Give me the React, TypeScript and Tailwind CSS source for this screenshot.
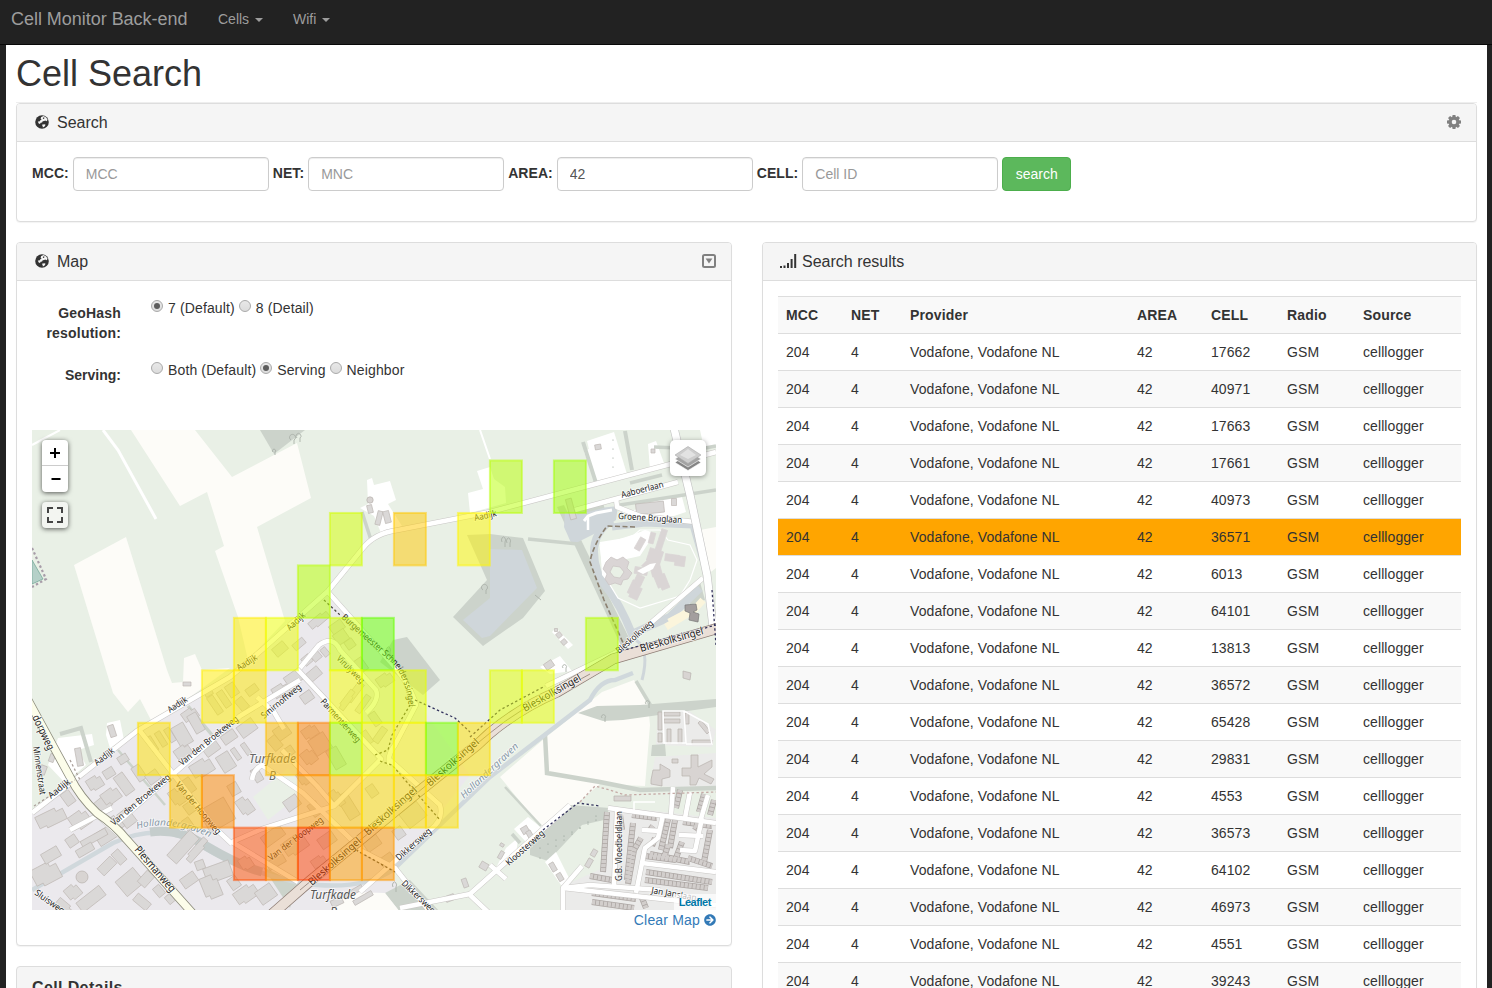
import React from "react";
import { FaArrowCircleRight } from "react-icons/fa";

type Pt = [number, number, number, number];
type Box = [number, number, number, number, number];

const rows = [17662, 40971, 17663, 17661, 40973, 36571, 6013, 64101, 13813, 36572, 65428, 29831, 4553, 36573, 64102, 46973, 4551, 39243];

const cells: [number, number, string][] = [
  [14, 0, "#b8ff00"], [16, 0, "#a2ff00"],
  [9, 1, "#d4ff00"], [11, 1, "#ffc800"], [13, 1, "#fff700"],
  [8, 2, "#b8ff00"],
  [6, 3, "#ffee00"], [7, 3, "#eeff00"], [9, 3, "#d0ff00"], [10, 3, "#66ff00"], [17, 3, "#b8ff00"],
  [5, 4, "#ffee00"], [6, 4, "#ffea00"], [9, 4, "#f7ff00"], [10, 4, "#dcff00"], [11, 4, "#e6ff00"], [14, 4, "#e4ff00"], [15, 4, "#eaff00"],
  [3, 5, "#ffe100"], [7, 5, "#ffc000"], [8, 5, "#ff8400"], [9, 5, "#aaff00"], [10, 5, "#f2fa00"], [11, 5, "#faf500"], [12, 5, "#7dff00"], [13, 5, "#ffdd00"],
  [4, 6, "#ffc400"], [5, 6, "#ff8a00"], [8, 6, "#ff9900"], [9, 6, "#ffc800"], [10, 6, "#ffe000"], [11, 6, "#ffdd00"], [12, 6, "#ffdd00"],
  [6, 7, "#ff4d00"], [7, 7, "#ff8800"], [8, 7, "#ff4000"], [9, 7, "#ff9d00"], [10, 7, "#ff9900"],
];

// Industrial estate footprints: x, y, width, height, rotation
const buildings: Box[] = [
  [152, 744, 6, 16, -32], [161, 739, 6, 16, -32], [170, 735, 6, 15, -32], [182, 735, 14, 22, -30], [190, 715, 15, 12, -35], [196, 723, 10, 20, -30],
  [183, 752, 16, 12, -35], [215, 705, 7, 20, -34], [224, 699, 7, 18, -34], [208, 692, 8, 8, -30], [232, 690, 10, 13, -34], [242, 704, 9, 13, -40],
  [252, 690, 12, 8, -36], [247, 728, 18, 13, -36], [229, 737, 15, 10, -35], [211, 748, 16, 12, -36], [202, 768, 22, 16, -32], [226, 762, 14, 18, -32],
  [246, 749, 5, 13, -35], [236, 754, 5, 13, -35], [281, 691, 16, 13, -32], [294, 678, 18, 12, -35], [307, 697, 12, 10, -35], [314, 674, 14, 10, -40],
  [280, 649, 14, 10, -40], [299, 644, 13, 7, -40], [319, 620, 22, 9, -40], [307, 660, 9, 9, -40], [316, 656, 9, 9, -40], [325, 652, 6, 9, -40],
  [337, 627, 14, 10, -35], [341, 637, 13, 12, -35], [350, 644, 9, 9, -35], [361, 665, 9, 14, -35], [385, 680, 16, 12, -35],
  [355, 692, 7, 22, 37], [347, 700, 7, 22, 37], [363, 704, 6, 20, 35], [375, 719, 8, 14, -35], [380, 735, 17, 7, -55], [366, 738, 9, 14, -35],
  [282, 732, 15, 13, -35], [275, 743, 10, 14, -40], [288, 752, 12, 9, -35], [310, 732, 15, 12, -35], [320, 744, 18, 18, -33], [309, 757, 13, 15, -38],
  [336, 758, 12, 21, -30], [304, 778, 11, 14, -35], [292, 803, 15, 12, -35], [315, 809, 10, 14, -35], [348, 806, 12, 27, -32], [337, 798, 9, 18, -35],
  [372, 791, 9, 12, -35], [383, 820, 10, 9, -35], [413, 815, 22, 18, -38], [399, 833, 10, 11, -35], [372, 843, 16, 12, -35], [387, 860, 14, 10, -35],
  [273, 836, 23, 12, -36], [295, 845, 24, 17, -35], [327, 840, 17, 12, -35], [319, 862, 14, 11, -35], [276, 862, 19, 9, -30],
  [51, 818, 29, 15, -26], [68, 798, 10, 14, -36], [80, 820, 19, 17, -35], [102, 805, 17, 13, -40], [95, 783, 15, 13, -32], [109, 773, 11, 9, -32],
  [123, 759, 10, 8, -32], [124, 784, 11, 22, -36], [111, 796, 18, 14, -36], [139, 773, 9, 16, -34], [153, 777, 13, 11, -36], [127, 818, 13, 17, -37],
  [116, 823, 11, 15, -37], [108, 834, 25, 14, -32], [72, 841, 11, 10, -34], [94, 838, 28, 7, -29], [85, 850, 18, 8, -30], [107, 866, 18, 10, -45],
  [119, 857, 9, 14, -42], [130, 882, 23, 19, -40], [146, 879, 15, 10, -48], [159, 891, 8, 11, -40], [171, 898, 10, 9, -40], [142, 902, 17, 9, 40],
  [46, 874, 27, 20, -28], [51, 855, 18, 11, -30], [73, 892, 14, 14, -40], [91, 899, 29, 12, -38], [64, 907, 18, 10, 40], [183, 847, 13, 34, 42],
  [197, 850, 8, 28, 42], [189, 880, 16, 11, -35], [200, 865, 9, 9, -20], [218, 872, 27, 16, -20], [211, 887, 17, 23, -22], [234, 883, 10, 12, -35],
  [246, 894, 23, 15, -35], [266, 894, 18, 15, -35], [246, 863, 12, 13, -33], [217, 815, 29, 25, -30], [245, 806, 13, 18, -35], [234, 789, 10, 12, -30],
  [257, 775, 8, 14, -30], [188, 786, 11, 15, -35], [177, 797, 12, 17, -35], [191, 807, 13, 11, -36], [188, 824, 8, 12, -35],
  [353, 892, 21, 5, -30], [363, 898, 21, 5, -30], [337, 902, 12, 7, -25], [79, 757, 6, 18, -10], [43, 770, 6, 9, 20], [52, 758, 5, 8, 20],
  [112, 731, 6, 12, -18], [187, 684, 8, 4, 0], [379, 518, 5, 14, 14], [387, 517, 6, 12, -14], [370, 509, 5, 8, -14], [571, 509, 6, 21, -15],
  [650, 508, 28, 11, -6], [674, 502, 5, 7, 0], [653, 451, 4, 4, 0], [598, 447, 6, 5, -10], [564, 642, 5, 5, -40], [559, 635, 5, 5, -40], [556, 630, 3, 3, 0],
  [549, 665, 9, 7, -35], [525, 830, 7, 7, -30], [530, 835, 5, 9, -30], [553, 867, 5, 9, -30], [560, 877, 5, 8, -30], [589, 863, 5, 9, 30], [594, 853, 5, 7, 30],
  [484, 866, 8, 7, 30], [465, 883, 5, 9, -20], [450, 898, 9, 6, -20], [502, 845, 4, 3, 30], [501, 855, 4, 8, 30],
];

const hero: Box[] = [
  [661, 541, 6, 24, 18], [652, 538, 5, 11, 15], [640, 544, 6, 13, 30], [655, 556, 14, 13, 18], [641, 571, 13, 7, 10], [650, 563, 16, 8, -45],
  [635, 590, 12, 17, 25], [639, 580, 8, 10, 25], [661, 580, 11, 20, -22], [656, 570, 10, 12, -15], [672, 558, 14, 7, 8], [680, 561, 10, 10, 8],
];

const fields = [
  "131,430 195,430 232,477 297,443 311,498 257,527 285,621 248,660 238,617 215,551 224,546 207,492 180,506",
  "74,565 126,537 167,670 172,683 183,682 184,658 195,654 202,670 230,668 153,724 140,699 128,712 113,693",
  "500,777 545,738 602,692 634,680 648,705 650,725 645,786 600,784 575,805 543,829",
  "700,530 716,527 716,568 707,575",
];

const whites = [
  "367,480 372,478 374,485 390,481 396,500 388,504 402,526 381,533 374,516 360,508 368,504",
  "468,493 483,489 477,471 490,467 494,479 505,487 506,503 470,513",
  "587,441 614,432 627,474 598,486", "648,444 656,441 665,466 650,470",
  "540,667 560,656 572,671 550,674", "700,430 716,430 716,445 704,448",
  "58,738 92,734 94,745 78,750 86,765 65,783 48,765", "107,723 120,720 124,740 110,748 106,735",
  "514,829 528,817 543,829 526,842", "490,880 506,848 518,838 516,855", "545,862 556,852 570,880 563,888",
  "552,632 556,628 573,645 568,649", "632,511 662,498 682,497 686,512 668,518 630,514",
  "584,452 590,448 600,482 596,484",
];

const streets = [
  "M32 813 L76 779 L137 731 L230 677 L263 649 L328 591 L363 548 Q375 533 398 530 L490 512 L716 452",
  "M575 510 L678 482", "M616 498 L617 507 L640 516 L695 522", "M328 592 L393 665 Q412 688 416 705 L395 745 Q386 757 390 765",
  "M300 668 L319 645 Q333 635 340 650 L376 690 Q380 700 366 713", "M297 669 L381 759 L334 806 L317 786 L282 750",
  "M70 830 L112 808", "M110 829 L240 716 L300 680", "M140 731 L215 828 L232 844", "M257 697 L274 712 L284 729",
  "M390 760 L440 805 Q444 820 430 830 L360 892", "M232 842 L262 829 L334 806", "M360 850 L395 868 L430 912",
  "M252 780 Q253 770 262 765 L303 793 L361 849", "M232 842 L298 882", "M125 840 L97 815",
  "M703 578 L617 652 L546 686", "M400 908 L470 894 L570 805", "M490 865 L506 879", "M470 895 L488 912",
  "M544 828 L560 815", "M608 808 L716 823", "M563 888 L582 866", "M563 888 L716 905", "M563 912 V888 L590 885 L660 890",
  "M617 810 L614 887", "M663 815 L658 838 L645 848 L636 893", "M642 830 L660 831", "M702 818 L695 851 L680 850", "M679 835 L703 836",
  "M642 863 L716 872", "M673 787 L671 815", "M708 795 L700 822", "M690 792 L685 818",
];

const trees = [
  "467,535 490,534 523,538 545,591 523,618 490,641 483,646 453,617 487,580",
  "260,430 305,430 274,454", "393,640 407,637 440,680 423,695 380,662",
  "578,713 597,706 640,705 716,699 716,707 623,720 603,721", "652,745 665,744 666,756 651,756",
  "530,840 545,828 570,805 610,808 604,820 582,825 548,861 530,855",
  "557,507 564,505 630,640 622,648", "263,867 298,884 290,908", "385,893 410,880 440,912 400,912", "690,590 700,582 705,600 690,605",
];

const labels: { t: string; p: Pt; s?: number; c?: string; i?: boolean }[] = [
  { t: "Aadijk", p: [475, 521, 497, 516] }, { t: "Aadijk", p: [290, 631, 306, 616] }, { t: "Aadijk", p: [239, 671, 258, 659] },
  { t: "Aadijk", p: [170, 713, 188, 701] }, { t: "Aadijk", p: [97, 766, 115, 752] }, { t: "Aadijk", p: [51, 799, 71, 783] },
  { t: "Aaboerlaan", p: [622, 498, 664, 487] }, { t: "Groene Bruglaan", p: [618, 519, 682, 523] },
  { t: "Bleskolkweg", p: [619, 654, 654, 624] }, { t: "Virulyweg", p: [336, 659, 361, 684] }, { t: "Parmentierweg", p: [320, 702, 357, 743] },
  { t: "Smirnoffweg", p: [264, 719, 302, 688] }, { t: "Van den Broekeweg", p: [182, 766, 239, 720] }, { t: "Van den Broekeweg", p: [114, 826, 171, 778] },
  { t: "Van der Hoopweg", p: [175, 785, 217, 835] }, { t: "Van der Hoopweg", p: [271, 861, 324, 821] },
  { t: "Dikkersweg", p: [399, 861, 432, 832] }, { t: "Dikkersweg", p: [401, 884, 432, 914] }, { t: "Kloosterweg", p: [509, 866, 545, 834] },
  { t: "G.B. Vloedbeldlaan", p: [622, 881, 622, 811] }, { t: "Jan Janslaan", p: [651, 893, 696, 901] }, { t: "Minnenstraat", p: [33, 747, 40, 795] }, { t: "Sluisweg", p: [34, 894, 62, 914] },
  { t: "dorpweg", p: [32, 717, 48, 751], s: 11 }, { t: "Plesmanweg", p: [134, 850, 171, 893], s: 11 },
  { t: "Bleskolksingel", p: [312, 886, 362, 842], s: 10.5 }, { t: "Bleskolksingel", p: [368, 836, 418, 791], s: 10.5 },
  { t: "Bleskolksingel", p: [430, 787, 480, 743], s: 10.5 }, { t: "Bleskolksingel", p: [525, 712, 582, 680], s: 10.5 }, { t: "Bleskolksingel", p: [641, 652, 704, 634], s: 10.5 },
  { t: "Turfkade", p: [249, 763, 296, 763], s: 12, c: "#666", i: true }, { t: "B", p: [269, 780, 276, 780], s: 12, c: "#666", i: true },
  { t: "Turfkade", p: [310, 899, 356, 899], s: 12, c: "#555", i: true }, { t: "B", p: [330, 916, 337, 916], s: 12, c: "#555", i: true },
  { t: "Hollandergraven", p: [464, 799, 519, 747], s: 9.5, c: "#8798a7", i: true },
];

function Label({ t, p, s = 9, c = "#1c1c1c", i }: { t: string; p: Pt; s?: number; c?: string; i?: boolean }) {
  const dx = p[2] - p[0];
  const dy = p[3] - p[1];
  return (
    <text
      transform={`translate(${p[0]} ${p[1]}) rotate(${(Math.atan2(dy, dx) * 180) / Math.PI})`}
      textLength={Math.hypot(dx, dy)}
      lengthAdjust="spacingAndGlyphs"
      fontSize={s}
      fontStyle={i ? "italic" : "normal"}
      fill={c}
      stroke="#fff"
      strokeOpacity={0.7}
      strokeWidth={1.6}
      paintOrder="stroke"
    >
      {t}
    </text>
  );
}

function Footprints({ items, fill = "#dad8d7", outline = "#bfb9b5" }: { items: Box[]; fill?: string; outline?: string }) {
  return (
    <g fill={fill} stroke={outline} strokeWidth={0.7}>
      {items.map(([x, y, w, h, r], k) => (
        <path
          key={k}
          transform={`translate(${x} ${y}) rotate(${r})`}
          d={w * h > 150 && k % 2 === 0
            ? `M${-w / 2} ${-h / 2}H${w / 4}V${-h / 4}H${w / 2}V${h / 2}H${-w / 4}V${h / 3}H${-w / 2}Z`
            : `M${-w / 2} ${-h / 2}H${w / 2}V${h / 2}H${-w / 2}Z`}
        />
      ))}
    </g>
  );
}

function Terraces() {
  const lines = [
    "M632 815 L657 818", "M633 823 L627 880", "M641 838 L634 850 L628 884", "M607 812 L603 872", "M668 819 L661 850", "M675 820 L670 848", "M645 856 L676 860",
    "M683 822 L712 826", "M710 830 L704 862", "M688 858 L712 866", "M646 872 L712 882", "M645 880 L708 888", "M592 893 L636 899", "M592 902 L634 908",
    "M682 842 L676 858", "M653 826 L650 830", "M704 794 L699 812", "M680 790 L676 808", "M714 800 L710 815", "M642 898 L646 908", "M590 876 L612 880",
    "M668 845 L664 858", "M694 826 L700 830", "M655 838 L652 846", "M650 854 L690 862", "M620 815 L622 830",
  ];
  return (
    <g fill="none">
      {lines.map((d) => <path key={d} d={d} stroke="#aca6a3" strokeWidth={6} />)}
      {lines.map((d) => <path key={d} d={d} stroke="#d2cecc" strokeWidth={4.6} strokeDasharray="3.2 .8" />)}
    </g>
  );
}

function MapDrawing() {
  return (
    <svg viewBox="32 430 684 480" width="684" height="480" className="block" fontFamily="'Noto Sans', sans-serif">
      <rect x="32" y="430" width="684" height="480" fill="#e9f0e6" />
      {fields.map((p) => <polygon key={p} points={p} fill="#fdfcf8" />)}
      <polygon points="32,813 137,731 230,677 328,590 400,668 420,705 470,775 393,872 405,912 32,912" fill="#ebe9ed" />
      <polygon points="610,806 716,818 716,912 562,912 565,885 603,868" fill="#ebebea" />
      <polygon points="658,708 685,708 716,730 712,747 656,745" fill="#ebebea" />
      <polygon points="655,757 716,753 716,788 650,786" fill="#ebebea" />
      {trees.map((p) => <polygon key={p} points={p} fill="#ccd3cb" />)}
      {whites.map((p) => <polygon key={p} points={p} fill="#fff" />)}
      <polygon points="490,549 522,550 537,588 490,636 482,638 463,620 490,598" fill="#cfd6da" />
      <polygon points="253,797 288,768 298,782 296,798 268,820" fill="#e9f0e6" />
      <polygon points="349,892 385,893 400,912 330,912" fill="#fdfcf8" />
      <polygon points="565,512 600,508 618,506 616,520 598,532 572,545 564,527" fill="#cfd6da" />
      <g fill="none" stroke="#cfd6da">
        <path d="M612 520 Q594 532 594 552 T607 588 T632 634 L670 617 L700 588" strokeWidth="8" />
        <path d="M612 527 L645 523 L693 525 L703 560" strokeWidth="7" />
        <path d="M642 680 Q650 650 636 640" strokeWidth="3" />
      </g>
      <path d="M584 521 L588 516 L596 513 L612 510" fill="none" stroke="#fff" strokeWidth="3" />
      <path d="M588 516 L588 530" fill="none" stroke="#fff" strokeWidth="2.5" />
      <polygon points="600,545 618,540 634,535 640,530 660,530 668,540 690,545 697,560 690,580 680,596 640,608 618,598 604,575" fill="#e9f0e6" stroke="#fff" strokeWidth="1.2" />
      <polygon points="600,542 625,538 645,530 655,533 640,556 622,560 610,558 606,580 602,575" fill="#fff" />
      <g fill="none" stroke="#ccd3cb" strokeWidth="3.5">
        <path d="M545 735 L547 773 L600 782 L640 790 L716 788" strokeWidth="4.5" />
        <path d="M528 539 L578 544" /><path d="M505 787 L541 826" strokeWidth="2.5" /><path d="M583 442 L597 486 M625 431 L632 470" strokeWidth="4" />
        <path d="M636 681 L651 706" /><path d="M60 734 L81 728 L91 762" strokeWidth="4" /><path d="M118 750 L165 805" strokeWidth="2.5" />
        <path d="M362 512 L371 540" /><path d="M188 706 L212 735" /><path d="M620 505 L716 490" /><path d="M630 483 L662 475" /><path d="M577 513 L604 506" />
        <path d="M654 447 L700 449 L716 446" /><path d="M512 834 L520 843" />
      </g>
      <path d="M32 890 L113 843 Q163 820 203 847 Q240 870 300 883 Q360 892 393 870 L490 777 L590 700 Q600 680 615 680 L633 673" fill="none" stroke="#d0d8dc" strokeWidth="4.5" />
      <path d="M150 832 Q180 828 206 846 Q240 866 262 872" fill="none" stroke="#c5cdcc" strokeWidth="9" />
      <path d="M32 445 L60 430 M480 430 L490 459" fill="none" stroke="#fff" strokeWidth="2" />
      <path d="M103 430 L118 450 L156 519" fill="none" stroke="#fff" strokeWidth="3" />
      <Footprints items={buildings} />
      <Terraces />
      <g fill="none" stroke="#c9c7c5" strokeWidth="5.6" strokeLinejoin="round">{streets.map((d) => <path key={d} d={d} />)}</g>
      <g fill="none" stroke="#fff" strokeWidth="4.6" strokeLinejoin="round">{streets.map((d) => <path key={d} d={d} />)}</g>
      <Footprints items={hero} outline="#dad5d5" fill="#dad5d5" />
      <path d="M606 562 l5 -5 6 3 6 -3 6 5 -2 6 5 5 -4 6 -5 1 -2 5 -6 -2 -6 2 -4 -6 2 -5 -4 -5z M613 566 l-3 6 4 5 6 1 4 -6 -4 -5z" fill="#dad5d5" stroke="#c9c2c2" strokeWidth=".7" fillRule="evenodd" />
      <path d="M637 571 L650 564 656 563 653 569 643 574Z" fill="#fff" />
      <path d="M666 627 L694 610 L703 600 M669 622 L688 612" fill="none" stroke="#fbf5dc" strokeWidth="7" />
      <path d="M685 605 L696 604 697 610 693 612 699 614 698 622 689 620 690 613 685 611Z" fill="#a39e9e" stroke="#777" strokeWidth=".7" />
      <g fill="#d8d4d2" stroke="#b8b2ae" strokeWidth=".7">
        <path d="M651 780 L653 770 H660 V764 L670 770 V777 L662 779 V786 L651 784Z" />
        <path d="M682 768 H691 V755 H698 V767 L712 760 V767 L704 774 L714 779 L711 784 L699 778 L696 785 H690 V776 H682Z" />
        <path d="M658 712 H662 V730 H658Z M658 733 H662 V742 H658Z M667 729 H671 V743 H667Z M678 729 H682 V743 H678Z M685 713 H689 V724 H685Z M701 720 L710 731 707 734 698 723Z M692 740 H712 V744 H692Z M664 712 H680 V716 H664Z M664 719 H680 V723 H664Z" />
        <circle cx="82" cy="877" r="6" /><circle cx="370" cy="500" r="3.2" />
        <path d="M614 796 H631 V801 H614Z M672 759 H678 V763 H672Z M683 671 L691 673 690 680 683 678Z" />
      </g>
      <path d="M663 711 H684 L686 743 H664Z M684 711 L708 724 712 744 H686 M655 802 H634 V810" fill="none" stroke="#fff" strokeWidth="1.5" />
      <path d="M673 424 L690 495 L707 575 L714 635" fill="none" stroke="#c4c4c4" strokeWidth="8.5" />
      <path d="M673 424 L690 495 L707 575 L714 635" fill="none" stroke="#fff" strokeWidth="7.3" />
      <path d="M270 916 L310 881 L360 840 L417 793 L477 745 L490 733 Q520 708 557 692 L613 659 L722 627" fill="none" stroke="#8d7c74" strokeWidth="11" />
      <path d="M270 916 L310 881 L360 840 L417 793 L477 745 L490 733 Q520 708 557 692 L613 659 L722 627" fill="none" stroke="#eadfd7" strokeWidth="9.6" />
      <path d="M300 890 L417 793 L490 733 Q520 708 557 692 L590 674" fill="none" stroke="#8d7c74" strokeWidth=".8" />
      <path d="M28 700 L70 777 Q80 797 97 813 Q115 825 127 840 L195 916" fill="none" stroke="#8b8b7c" strokeWidth="8.8" />
      <path d="M28 700 L70 777 Q80 797 97 813 Q115 825 127 840 L195 916" fill="none" stroke="#fcfdea" strokeWidth="7.2" />
      <g fill="none" strokeWidth="1.3" strokeDasharray="2.4 2.4">
        <path d="M415 700 L455 718 L470 732 M470 737 L500 710 L545 686 M617 652 L716 625 M543 830 L578 803 L600 806 M712 590 L716 645" stroke="#34345e" />
        <path d="M375 755 L388 750 L392 735 L410 705 M380 761 L392 765 L440 820 M324 600 L340 615 M356 850 L395 872" stroke="#4c4c42" />
        <path d="M580 802 L595 786 L610 790 L625 795 L716 792" stroke="#c5aaa6" />
        <path d="M635 527 L607 526 Q593 545 590 562 L604 600 L624 645" stroke="#8b8070" strokeWidth="1.6" strokeDasharray="5 2.5" />
        <path d="M32 548 L46 579 L32 587" stroke="#a79ca8" strokeWidth="2.2" />
        <path d="M34 806 L75 780 M70 760 L80 780" stroke="#aa9f9a" />
      </g>
      <polygon points="32,560 43,579 32,584" fill="#b5d0c8" stroke="#6da394" strokeWidth=".7" />
      <g fill="none" stroke="#aab1a9" strokeWidth=".9">
        <path d="M291 440 a3 3 0 1 1 3 0 v4 M297 438 a2.5 2.5 0 1 1 3 0 v4 M273 452 a1.6 1.6 0 1 1 2 0 v3 M502 542 a2 3 0 1 1 3 0 v5 M507 543 a2 3 0 1 1 3 0 v4" />
        <path d="M483 590 a3 3 0 1 1 3 0 v4 M602 718 a2 2 0 1 1 3 0 v4 M387 652 a2 3 0 1 1 3 0 v4 M393 887 a2 3 0 1 1 3 0 v5 M563 668 a2 2 0 1 1 3 0 v4 M535 595 l6 5 M646 704 a2 2 0 1 1 3 0 v4" />
      </g>
      <g fill="#8d9a90">
        {[540, 548, 556, 564, 572, 580, 588, 596].map((x, k) => (
          <React.Fragment key={x}><circle cx={x} cy={858 - k * 6} r=".6" /><circle cx={x} cy={848 - k * 4} r=".6" /></React.Fragment>
        ))}
        {[440, 449, 458, 467].map((y) => <circle key={y} cx="613" cy={y} r=".6" />)}
      </g>
      {labels.map((l, k) => <Label key={k} {...l} />)}
      <path id="singel" d="M341 618 Q372 646 392 663 Q406 678 409 708" fill="none" />
      <text fontSize="9" fill="#1c1c1c"><textPath href="#singel" textLength="116" lengthAdjust="spacingAndGlyphs">Burgemeester Schneiderssingel</textPath></text>
      <path id="graven" d="M137 829 Q170 819 211 838" fill="none" />
      <text fontSize="9.5" fill="#8798a7" fontStyle="italic" stroke="#fff" strokeWidth="1.4" strokeOpacity=".7" paintOrder="stroke"><textPath href="#graven" textLength="75" lengthAdjust="spacingAndGlyphs">Hollandergraven</textPath></text>
      {cells.map(([c, r, color]) => (
        <rect key={`${c}-${r}`} x={41.9 + c * 32} y={460.5 + r * 52.45} width="32" height="52.45" fill={color} fillOpacity=".5" stroke={color} strokeOpacity=".5" strokeWidth="2" />
      ))}
    </svg>
  );
}

function Globe() {
  return (
    <svg width="14" height="14" viewBox="0 0 14 14" className="-mt-px shrink-0">
      <circle cx="7" cy="7" r="6.8" fill="#333" />
      <path d="M6.2 2 8.6 1.1 11.2 2.4 12.6 4.8 11.6 6.2 10.2 5.4 9.2 6.1 7.7 6.3 7.1 7.6 5.6 7.7 5 9 3.7 8.5 2.8 6.6 4.4 6.6 5.4 5.2 6.6 4.6 5.6 3.4Z" fill="#f5f5f5" />
      <path d="M8 2.6 9.4 2.5 9.2 3.8 7.9 3.9Z" fill="#333" />
      <path d="M6.9 9.7 9.3 9.2 10.6 9.8 9.6 11.6 7.9 12.6 7.6 11Z" fill="#f5f5f5" />
    </svg>
  );
}

function Gear() {
  return (
    <svg width="14" height="14" viewBox="0 0 14 14" className="-mt-px block">
      <g fill="#808080">
        {[0, 45, 90, 135, 180, 225, 270, 315].map((a) => <path key={a} d="M5.6 0H8.4L9 3H5Z" transform={`rotate(${a} 7 7)`} />)}
      </g>
      <circle cx="7" cy="7" r="3.75" fill="none" stroke="#808080" strokeWidth="2.9" />
    </svg>
  );
}

function BoxedCaret() {
  return (
    <svg width="14" height="14" viewBox="0 0 14 14" className="-mt-px block">
      <rect x="1" y="1" width="12" height="12" rx="1.5" fill="none" stroke="#808080" strokeWidth="2" />
      <path d="M3.6 4.6H10.4L7 9.6Z" fill="#808080" />
    </svg>
  );
}

function Signal() {
  return (
    <svg width="17" height="14" viewBox="0 0 17 14" className="-mt-px block">
      <path d="M0 12h2v2H0zM3.5 11.4h2v2.6h-2zM7 9h2v5H7zM10.6 5h2v9h-2zM14.2 0h2v14h-2z" fill="#333" />
    </svg>
  );
}

function Panel({ title, icon, tool, children, className = "" }: { title: string; icon: React.ReactNode; tool?: React.ReactNode; children: React.ReactNode; className?: string }) {
  return (
    <section className={`rounded border border-[#ddd] bg-white shadow-[0_1px_1px_rgba(0,0,0,.05)] ${className}`}>
      <header className="flex h-[38px] items-center justify-between rounded-t-[3px] border-b border-[#ddd] bg-[#f5f5f5] pr-[15px]">
        <h3 className="flex items-center text-base leading-none">{icon}<span>{title}</span></h3>
        {tool}
      </header>
      {children}
    </section>
  );
}

function Field({ label, placeholder, value }: { label: string; placeholder: string; value?: string }) {
  return (
    <label className="flex items-center gap-1">
      <span className="-mt-0.5 whitespace-nowrap font-bold tracking-[0.06px]">{label}</span>
      <input defaultValue={value} placeholder={placeholder} className="h-[34px] w-[196px] rounded border border-[#ccc] bg-white px-3 text-[#555] shadow-[inset_0_1px_1px_rgba(0,0,0,.075)] placeholder:text-[#999]" />
    </label>
  );
}

function Radio({ label, on }: { label: string; on?: boolean }) {
  return (
    <label className="flex items-center tracking-[0.13px]">
      <span className="mb-1 mr-[5px] flex size-3 items-center justify-center rounded-full border border-[#a9a9a9] bg-linear-to-b from-[#e8e8e8] to-[#dcdcdc]">
        {on && <span className="size-1.5 rounded-full bg-[#5c5c5c]" />}
      </span>
      {label}
    </label>
  );
}

function Caret() {
  return <span className="ml-1.5 mt-0.5 border-x-4 border-t-4 border-x-transparent border-t-[#9d9d9d]" />;
}

export default function App() {
  return (
    <div className="h-[988px] w-[1492px] overflow-hidden bg-[#222] text-[14px] leading-5 text-[#333] [font-family:'Liberation_Sans',Arial,sans-serif]">
      <nav className="flex h-[45px] border-b border-[#080808] bg-[#222] pl-[11px] pt-[9px] text-[#9d9d9d]">
        <span className="w-[207px] text-lg leading-5 tracking-[-0.03px]">Cell Monitor Back-end</span>
        <span className="flex h-5 w-[75px] items-center">Cells<Caret /></span>
        <span className="flex h-5 items-center">Wifi<Caret /></span>
      </nav>
      <main className="ml-1.5 w-[1481px] bg-white px-2.5">
        <h1 className="h-[58px] border-b border-[#eee] pt-[9px] text-[36px] leading-10">Cell Search</h1>
        <Panel title="Search" className="h-[119px]" icon={<span className="ml-[18px] mr-2"><Globe /></span>} tool={<Gear />}>
          <form className="flex items-center gap-1 px-[15px] pt-[15px]">
            <Field label="MCC:" placeholder="MCC" />
            <Field label="NET:" placeholder="MNC" />
            <Field label="AREA:" placeholder="Area" value="42" />
            <Field label="CELL:" placeholder="Cell ID" />
            <button type="button" className="h-[34px] w-[69px] rounded border border-[#4cae4c] bg-[#5cb85c] text-white">search</button>
          </form>
        </Panel>
        <div className="mt-5 flex items-start gap-[30px]">
          <div className="flex w-[716px] flex-col gap-5">
            <Panel title="Map" className="h-[704px]" icon={<span className="ml-[18px] mr-2"><Globe /></span>} tool={<BoxedCaret />}>
              <div className="flex h-[149px] flex-col px-[15px] pt-[17px]">
                <div className="flex h-[62px]">
                  <b className="w-[89px] pt-[5px] text-right tracking-[0.2px]">GeoHash resolution:</b>
                  <div className="ml-[30px] flex h-5 items-center gap-1"><Radio label="7 (Default)" on /><Radio label="8 (Detail)" /></div>
                </div>
                <div className="flex">
                  <b className="w-[89px] pt-[5px] text-right">Serving:</b>
                  <div className="ml-[30px] flex h-5 items-center gap-1"><Radio label="Both (Default)" /><Radio label="Serving" on /><Radio label="Neighbor" /></div>
                </div>
              </div>
              <div className="relative mx-[15px] h-[480px] overflow-hidden">
                <MapDrawing />
                <div className="absolute left-2.5 top-2.5 h-[52px] w-[26px] rounded bg-white text-center shadow-[0_1px_5px_rgba(0,0,0,.65)]">
                  <div className="flex h-[26px] items-center justify-center border-b border-[#ccc]"><svg width="10" height="10"><path d="M5 0v10M0 5h10" stroke="#000" strokeWidth="2" /></svg></div>
                  <div className="flex h-[26px] items-center justify-center pl-px"><svg width="10" height="10"><path d="M.5 5h9" stroke="#000" strokeWidth="2" /></svg></div>
                </div>
                <div className="absolute left-2.5 top-[72px] flex size-[26px] items-center justify-center rounded bg-[#f3f5f1] shadow-[0_1px_5px_rgba(0,0,0,.65)]">
                  <svg width="16" height="16"><path d="M1 6V1h5M10 1h5v5M15 10v5h-5M6 15H1v-5" fill="none" stroke="#444" strokeWidth="2" /></svg>
                </div>
                <div className="absolute right-2.5 top-2.5 flex size-9 items-center justify-center rounded-[5px] bg-white shadow-[0_1px_5px_rgba(0,0,0,.4)]">
                  <svg width="28" height="28" viewBox="0 0 28 28">
                    <path d="M1 18.5 14 9.5 27 18.5 14 26.5Z" fill="#858585" stroke="#fff" strokeWidth=".6" />
                    <path d="M1 15 14 6 27 15 14 23Z" fill="#a3a3a3" stroke="#fff" strokeWidth=".6" />
                    <path d="M1 11 14 2.5 27 11 14 19.5Z" fill="#cdcdcd" stroke="#aaa" strokeWidth=".6" />
                    <path d="M6 11 14 5 22 11 14 15Z" fill="#e2e2e2" />
                  </svg>
                </div>
                <span className="absolute bottom-0 right-0 h-4 bg-white/70 px-[5px] text-[11px] font-bold leading-4 tracking-[-0.45px] text-[#0078a8]">Leaflet</span>
              </div>
              <a className="flex h-5 items-center justify-end gap-1 pr-[15px] tracking-[0.18px] text-[#337ab7]">Clear Map<FaArrowCircleRight size={12} /></a>
            </Panel>
            <section className="h-[60px] rounded border border-[#ddd] bg-[#f5f5f5] px-[15px] pt-3"><h3 className="text-base font-bold leading-[18px] tracking-[0.38px]">Cell Details</h3></section>
          </div>
          <Panel title="Search results" className="h-[780px] w-[715px]" icon={<span className="ml-[17px] mr-[5px]"><Signal /></span>}>
            <table className="ml-[15px] mt-[15px] w-[683px] table-fixed border-collapse text-left tracking-[0.08px]">
              <colgroup>
                <col className="w-[65px]" /><col className="w-[59px]" /><col className="w-[227px]" /><col className="w-[74px]" /><col className="w-[76px]" /><col className="w-[76px]" /><col />
              </colgroup>
              <thead>
                <tr className="h-[37px] border-t border-[#ddd] bg-[#f9f9f9] tracking-[0.15px]">
                  {["MCC", "NET", "Provider", "AREA", "CELL", "Radio", "Source"].map((h) => <th key={h} className="px-2 font-bold">{h}</th>)}
                </tr>
              </thead>
              <tbody>
                {rows.map((id, k) => (
                  <tr key={id} className={`h-[37px] border-t border-[#ddd] ${id === 36571 ? "bg-[#ffa500]" : k % 2 ? "bg-[#f9f9f9]" : "bg-white"}`}>
                    {["204", "4", "Vodafone, Vodafone NL", "42", String(id), "GSM", "celllogger"].map((v, j) => <td key={j} className="px-2">{v}</td>)}
                  </tr>
                ))}
              </tbody>
            </table>
          </Panel>
        </div>
      </main>
    </div>
  );
}
